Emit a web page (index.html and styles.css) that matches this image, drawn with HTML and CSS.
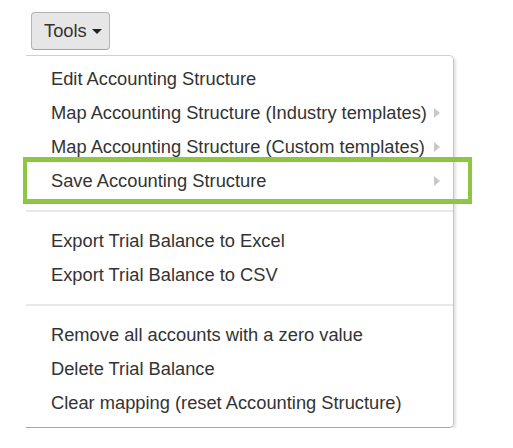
FILE: index.html
```html
<!DOCTYPE html>
<html>
<head>
<meta charset="utf-8">
<link rel="stylesheet" href="styles.css">
</head>
<body>
<div class="page">
  <button class="btn">Tools<span class="caret"></span></button>
  <ul class="menu">
    <li class="item">Edit Accounting Structure</li>
    <li class="item sub">Map Accounting Structure (Industry templates)<span class="arrow"></span></li>
    <li class="item sub">Map Accounting Structure (Custom templates)<span class="arrow"></span></li>
    <li class="item sub highlight">Save Accounting Structure<span class="arrow"></span></li>
    <li class="divider"></li>
    <li class="item">Export Trial Balance to Excel</li>
    <li class="item">Export Trial Balance to CSV</li>
    <li class="divider"></li>
    <li class="item">Remove all accounts with a zero value</li>
    <li class="item">Delete Trial Balance</li>
    <li class="item">Clear mapping (reset Accounting Structure)</li>
  </ul>
</div>
</body>
</html>
```

FILE: styles.css
```css
* { box-sizing: border-box; }
html, body { margin: 0; padding: 0; background: #fff; }
body {
  font-family: "Liberation Sans", Arial, sans-serif;
  color: #333;
}
.page {
  padding: 12px 0 0 26px;
  display: flex;
  flex-direction: column;
  align-items: flex-start;
}
.btn {
  margin-left: 5px;
  height: 38px;
  width: 79px;
  padding: 0 0 0 12px;
  font-family: inherit;
  font-size: 18.3px;
  color: #333;
  background: #e6e6e6;
  border: 1px solid #b4b4b4;
  border-bottom-color: #a4a4a4;
  border-radius: 4px;
  display: flex;
  align-items: center;
}
.caret {
  margin-left: 5px;
  width: 0;
  height: 0;
  border-top: 5px solid #222;
  border-left: 5px solid transparent;
  border-right: 5px solid transparent;
  margin-top: 1px;
}
.menu {
  list-style: none;
  margin: 5px 0 0 0;
  padding: 6px 0 7px;
  width: 428px;
  border-top: 1px solid #d0d0d0;
  border-right: 1px solid #c4c4c4;
  border-bottom: 1px solid #a8a8a8;
  border-radius: 0 5px 5px 0;
  box-shadow: 2px 2px 3px rgba(0,0,0,0.12);
  font-size: 18.3px;
}
.item {
  position: relative;
  display: flex;
  justify-content: space-between;
  align-items: center;
  line-height: 26px;
  padding: 4px 13px 4px 25px;
  white-space: nowrap;
}
.arrow {
  width: 0;
  height: 0;
  border-left: 6px solid #c8c8c8;
  border-top: 5px solid transparent;
  border-bottom: 5px solid transparent;
}
.divider {
  height: 2px;
  margin: 12px 0;
  background: #e8e8e8;
}
.highlight::after {
  content: "";
  position: absolute;
  left: -3px;
  right: -19px;
  top: -7px;
  bottom: -5px;
  border: 4px solid #8dc63f;
  box-shadow: inset 0 1px 0 #c9a24a, 0 1px 0 #c9a24a;
  pointer-events: none;
}
```
